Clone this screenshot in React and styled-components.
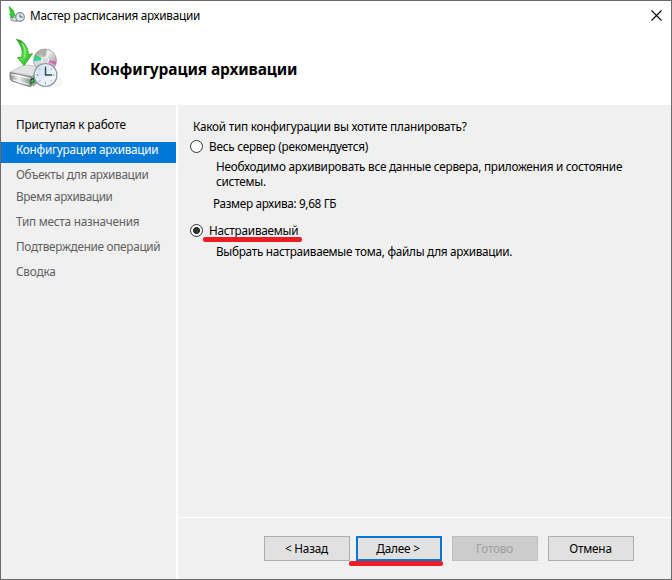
import { useState } from "react"
import styled, { createGlobalStyle, css } from 'styled-components'

const steps = [
    { title: 'Приступая к работе', visited: true, space: -0.15 },
    { title: 'Конфигурация архивации', space: -0.26 },
    { title: 'Объекты для архивации', space: -0.32 },
    { title: 'Время архивации', top: 1, space: -0.35 },
    { title: 'Тип места назначения', space: -0.23 },
    { title: 'Подтверждение операций', space: -0.28 },
    { title: 'Сводка', space: -0.18 },
]

function BackupArt({ size }) {
    return (
        <svg width={size} height={size} viewBox="0 0 54 54">
            <defs>
                <linearGradient id="arrow" x1="0" y1="0" x2="1" y2="1">
                    <stop offset="0" stopColor="#1f8a1c" />
                    <stop offset="0.5" stopColor="#5be04a" />
                    <stop offset="1" stopColor="#23a81d" />
                </linearGradient>
                <linearGradient id="disc" x1="0" y1="0" x2="0.6" y2="1">
                    <stop offset="0" stopColor="#858585" />
                    <stop offset="0.5" stopColor="#dedede" />
                    <stop offset="1" stopColor="#929292" />
                </linearGradient>
                <linearGradient id="drive" x1="0" y1="0" x2="1" y2="0">
                    <stop offset="0" stopColor="#8b8d8f" />
                    <stop offset="0.4" stopColor="#f2f2f2" />
                    <stop offset="1" stopColor="#7d7f80" />
                </linearGradient>
                <linearGradient id="face" x1="0" y1="0" x2="1" y2="1">
                    <stop offset="0" stopColor="#c9dcee" />
                    <stop offset="1" stopColor="#ffffff" />
                </linearGradient>
            </defs>
            <ellipse cx="42" cy="44" rx="12" ry="6" fill="#f6f6f6" />
            <circle cx="36" cy="22.500" r="11.500" fill="url(#disc)" stroke="#8c8c8c" strokeWidth="0.6" />
            <path d="M36 22L30 13 36 11.500 39 12Z" fill="#b0b0b0" />
            <path d="M36 22L38 11.500 43 14Z" fill="#ededed" />
            <path d="M36 22L25 20 26.500 17Z" fill="#2fdc4c" />
            <path d="M36 22L24.800 23 25 20Z" fill="#25cfc0" />
            <path d="M37 22L47.300 24 46.300 27Z" fill="#dd55bb" />
            <path d="M37 22L44 30 46.300 27Z" fill="#e6a0ca" />
            <circle cx="36" cy="22.500" r="3.600" fill="#d8d8d8" stroke="#fff" strokeWidth="0.8" />
            <path d="M1.500 34L14 27.500Q16 26.500 19 27L33 30 23 38Z" fill="#e4e4e4" stroke="#b5b5b5" strokeWidth="0.7" />
            <path d="M1 34.500L23 39 23 47.500Q21 49 19 48.200L3 43Q1 42 1 40Z" fill="url(#drive)" stroke="#6f7070" strokeWidth="0.8" />
            <path d="M23 39L31 31V43L24 48Z" fill="#a9abac" stroke="#777" strokeWidth="0.6" />
            <path d="M2.500 36.500L21.500 40.500" stroke="#fff" strokeWidth="1.200" />
            <path d="M4 42L20 46.500" stroke="#fafafa" strokeWidth="1" />
            <path d="M21.500 41L25.500 39.500V44.500L21.500 46Z" fill="#153a17" />
            <path d="M22.300 42L24.500 41V44L22.300 45Z" fill="#29e83a" />
            <path d="M7.500 1.500C14 2 19 8 19.500 17L23.500 15.500 15 27.500 8.500 19.500 12.500 19.500C14.500 12 11.500 6 7.500 1.500Z" fill="url(#arrow)" stroke="#249b20" strokeWidth="0.8" />
            <path d="M12.500 5C16.500 9 17 13 15.500 20" fill="none" stroke="#83f072" strokeWidth="1.600" />
            <circle cx="36.500" cy="37" r="11.300" fill="url(#face)" stroke="#8798a8" strokeWidth="1.500" />
            <circle cx="36.500" cy="37" r="10.300" fill="none" stroke="#f5f8fa" strokeWidth="0.9" />
            <path d="M36.500 28V30M36.500 44.500V46M27.500 37H29.500M44 37H45.500M30.100 30.600L31.100 31.600M42.900 30.600L41.900 31.600M30.100 43.400L31.100 42.400M42.900 43.400L41.900 42.400" stroke="#69809a" strokeWidth="1" />
            <path d="M36.500 29.500V37H43" fill="none" stroke="#30475f" strokeWidth="1.500" />
        </svg>
    )
}

function SmallArt() {
    return (
        <svg width="18" height="18" viewBox="0 0 18 18">
            <path d="M2.500 10.500L9 9 11 14 9 15.500 3 14.500Z" fill="#c4c7c9" stroke="#858889" strokeWidth="0.8" />
            <path d="M3.500 12.500L9 13.500" stroke="#fff" strokeWidth="1" />
            <path d="M1 0.500L5.500 4.500V8L7 7.500 4.500 12.500 1.500 8.500H3Z" fill="#27d82b" stroke="#159b1b" strokeWidth="0.6" />
            <circle cx="12" cy="11" r="4.300" fill="#dfe9f1" stroke="#7b8b98" strokeWidth="1.200" />
            <path d="M12 8.500V11H14.500" fill="none" stroke="#40586c" strokeWidth="1" />
        </svg>
    )
}

export default function App() {
    const [current, setCurrent] = useState(1)
    const [type, setType] = useState('custom')

    return (
        <Window>
            <GlobalStyle />
            <TitleBar>
                <SmallArt />
                <Title>Мастер расписания архивации</Title>
                <Close aria-label="Закрыть">
                    <svg width="11" height="11" viewBox="0 0 11 11">
                        <path d="M0.500 0.500L10.500 10.500M10.500 0.500L0.500 10.500" stroke="#000" strokeWidth="1.100" />
                    </svg>
                </Close>
            </TitleBar>
            <Header>
                <BackupArt size={54} />
                <Heading>Конфигурация архивации</Heading>
            </Header>
            <Body>
                <Sidebar>
                    {steps.map((step, i) => (
                        <Step
                            key={step.title}
                            $active={i === current}
                            $visited={step.visited}
                            $top={step.top}
                            $space={step.space}
                            onClick={() => i < current && setCurrent(i)}
                        >
                            {step.title}
                        </Step>
                    ))}
                </Sidebar>
                <Content>
                    <Form>
                        <Question>Какой тип конфигурации вы хотите планировать?</Question>
                        <Option onClick={() => setType('full')}>
                            <Radio $checked={type === 'full'} />
                            <Label>Весь сервер (рекомендуется)</Label>
                        </Option>
                        <Description>
                            Необходимо архивировать все данные сервера, приложения и состояние<br />
                            системы.
                        </Description>
                        <Size>Размер архива: 9,68 ГБ</Size>
                        <Option onClick={() => setType('custom')}>
                            <Radio $checked={type === 'custom'} />
                            <Label>Настраиваемый<Mark $left={-6} $top={14} $width={99} /></Label>
                        </Option>
                        <Description $last>Выбрать настраиваемые тома, файлы для архивации.</Description>
                    </Form>
                    <Footer>
                        <Button>&lt; Назад</Button>
                        <Button $primary>Далее &gt;<Mark $left={-9} $top={23} $width={94} /></Button>
                        <Button disabled>Готово</Button>
                        <Button>Отмена</Button>
                    </Footer>
                </Content>
            </Body>
        </Window>
    )
}

const GlobalStyle = createGlobalStyle`
    * {
        box-sizing: border-box;
    }
    body {
        margin: 0;
        background: #fff;
    }
`

const Window = styled.div`
    width: 672px;
    height: 580px;
    display: flex;
    flex-direction: column;
    border: 1px solid #6b6b6b;
    background: #fff;
    color: #000;
    font-family: "Noto Sans", "Open Sans", sans-serif;
    font-size: 11.75px;
    line-height: 15px;
    white-space: nowrap;
    overflow: hidden;
`
const TitleBar = styled.div`
    height: 30px;
    display: flex;
    align-items: center;
    padding: 0 9px 2px 7px;
`
const Title = styled.span`
    margin-left: 4px;
    flex: 1;
    letter-spacing: -0.27px;
`
const Close = styled.button`
    display: flex;
    padding: 0;
    border: none;
    background: none;
`
const Header = styled.header`
    height: 74px;
    display: flex;
    padding: 7px 0 0 8px;
`
const Heading = styled.h1`
    margin: 21px 0 0 27px;
    font-size: 15.5px;
    line-height: 20px;
    font-weight: 700;
    letter-spacing: -0.12px;
`
const Body = styled.div`
    flex: 1;
    display: flex;
    gap: 2px;
`
const Sidebar = styled.nav`
    width: 175px;
    padding-top: 8px;
    background: #f0f0f0;
`
const Step = styled.div`
    height: 21px;
    margin-top: ${({ $top }) => $top || 4}px;
    padding-left: 15px;
    color: ${({ $visited }) => $visited ? '#000' : '#5f5f5f'};
    letter-spacing: ${({ $space }) => $space}px;
    ${({ $active }) => $active && css`
        background: #0078d7;
        color: #fff;
    `}
`
const Content = styled.main`
    flex: 1;
    display: flex;
    flex-direction: column;
    background: #f0f0f0;
`
const Form = styled.section`
    height: 412px;
    padding: 14px 0 0 12px;
    letter-spacing: -0.23px;
`
const Question = styled.p`
    margin: 0 0 5px 3px;
`
const Option = styled.div`
    height: 15px;
    display: flex;
    align-items: center;
`
const Radio = styled.span`
    width: 13px;
    height: 13px;
    margin-right: 6px;
    border: 1px solid #333;
    border-radius: 50%;
    background: ${({ $checked }) => $checked ? 'radial-gradient(circle, #333 3.2px, #fff 3.8px)' : '#fff'};
`
const Label = styled.span`
    position: relative;
`
const Description = styled.p`
    margin: ${({ $last }) => $last ? '6px' : '5px'} 0 0 26px;
    letter-spacing: ${({ $last }) => $last ? '-0.28px' : '-0.24px'};
`
const Size = styled.p`
    margin: 7px 0 12px 23px;
    letter-spacing: -0.33px;
`
const Mark = styled.i`
    position: absolute;
    left: ${({ $left }) => $left}px;
    top: ${({ $top }) => $top}px;
    width: ${({ $width }) => $width}px;
    height: 5px;
    border-radius: 2px;
    background: #ed1c24;
`
const Footer = styled.footer`
    flex: 1;
    display: flex;
    justify-content: flex-end;
    padding: 18px 37px 0 0;
    border-top: 1px solid #fff;
`
const Button = styled.button`
    position: relative;
    width: 86px;
    height: 25px;
    margin-left: 10px;
    padding: 0 1px 0 0;
    border: 1px solid #adadad;
    background: #e1e1e1;
    color: #000;
    font: inherit;
    letter-spacing: -0.2px;
    &:disabled {
        border-color: #bfbfbf;
        background: #ccc;
        color: #a0a0a0;
    }
    ${({ $primary }) => $primary && css`
        margin-left: 6px;
        padding-right: 2px;
        border: 2px solid #0078d7;
    `}
`
